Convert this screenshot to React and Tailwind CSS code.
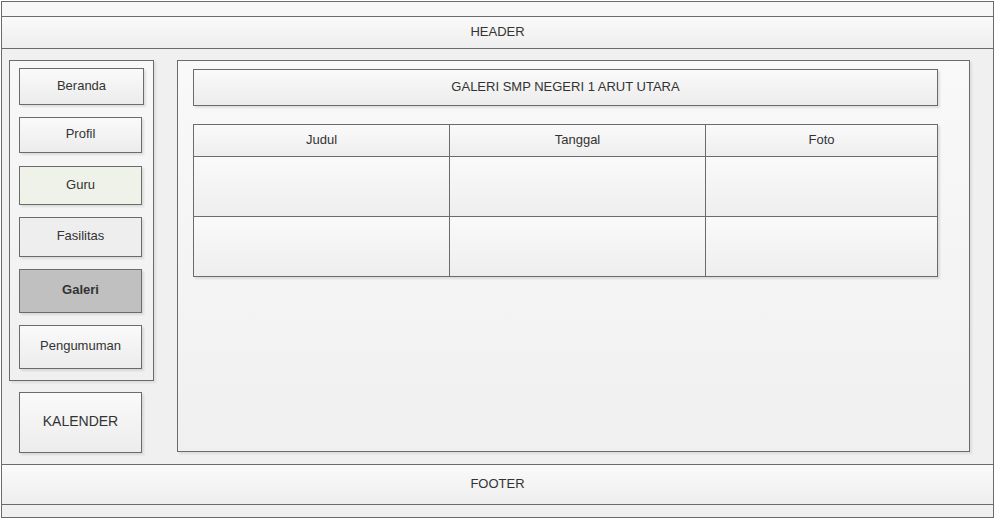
import React from 'react';

const menu = [
  { label: 'Beranda', box: 'w-[125px] h-[37px] bg-gradient-to-b from-[#fafafa] to-[#ececec]' },
  { label: 'Profil', box: 'w-[123px] h-[36px] mt-[12px] bg-gradient-to-b from-[#fafafa] to-[#ececec]' },
  { label: 'Guru', box: 'w-[123px] h-[39px] mt-[13px] bg-[#eef2e8]' },
  { label: 'Fasilitas', box: 'w-[123px] h-[40px] mt-[12px] bg-[#eeeeee]' },
  { label: 'Galeri', box: 'w-[123px] h-[44px] mt-[12px] bg-[#c0c0c0] font-bold' },
  { label: 'Pengumuman', box: 'w-[123px] h-[44px] mt-[12px] bg-gradient-to-b from-[#fafafa] to-[#ececec]' },
];

// text in the mockup sits about 1px above centre
const cell = 'bg-gradient-to-b from-[#fafafa] to-[#eeeeee] flex items-center justify-center pb-[2px]';

const App = () => {
  return (
    <div className="w-[997px] h-[521px] bg-white pt-px pl-px font-['Liberation_Sans',Arial,sans-serif] text-[13px] text-[#333]">
      <div className="w-[993px] h-[517px] border border-[#6b6b6b] bg-[#f0f0f0] flex flex-col">
        <div className="h-[14px] bg-[#f7f7f7]" />
        <div className="h-[33px] border-y border-[#6b6b6b] bg-gradient-to-b from-[#fafafa] to-[#eeeeee] flex items-center justify-center pb-[2px]">
          HEADER
        </div>

        <div className="h-[415px] flex pl-[7px] pt-[11px]">
          <div className="flex flex-col">
            <div className="w-[145px] h-[321px] border border-[#6b6b6b] bg-gradient-to-b from-[#f8f8f8] to-[#f0f0f0] pl-[9px] pt-[7px] flex flex-col shadow-[2px_2px_2px_rgba(0,0,0,0.08)]">
              {menu.map((m) => (
                <div
                  key={m.label}
                  className={`${m.box} border border-[#6b6b6b] flex items-center justify-center pb-[2px] shadow-[2px_2px_2px_rgba(0,0,0,0.1)]`}
                >
                  {m.label}
                </div>
              ))}
            </div>
            <div className="ml-[10px] mt-[11px] w-[123px] h-[61px] border border-[#6b6b6b] bg-gradient-to-b from-[#fafafa] to-[#ececec] flex items-center justify-center pb-[2px] text-[14px] shadow-[2px_2px_2px_rgba(0,0,0,0.1)]">
              KALENDER
            </div>
          </div>

          <div className="ml-[23px] w-[793px] h-[392px] border border-[#6b6b6b] bg-gradient-to-b from-[#f9f9f9] to-[#f0f0f0] pl-[15px] pt-[8px] shadow-[2px_2px_2px_rgba(0,0,0,0.08)]">
            <div className="w-[745px] h-[37px] border border-[#6b6b6b] bg-gradient-to-b from-[#fafafa] to-[#ececec] flex items-center justify-center pb-[2px] shadow-[2px_2px_2px_rgba(0,0,0,0.1)]">
              GALERI SMP NEGERI 1 ARUT UTARA
            </div>

            <div className="mt-[18px] w-[745px] border border-[#6b6b6b] grid grid-cols-[256px_256px_231px] grid-rows-[32px_60px_59px] shadow-[2px_2px_2px_rgba(0,0,0,0.1)]">
              <div className={`${cell} border-r border-b border-[#6b6b6b]`}>Judul</div>
              <div className={`${cell} border-r border-b border-[#6b6b6b]`}>Tanggal</div>
              <div className={`${cell} border-b border-[#6b6b6b]`}>Foto</div>
              <div className={`${cell} border-r border-b border-[#6b6b6b]`} />
              <div className={`${cell} border-r border-b border-[#6b6b6b]`} />
              <div className={`${cell} border-b border-[#6b6b6b]`} />
              <div className={`${cell} border-r border-[#6b6b6b]`} />
              <div className={`${cell} border-r border-[#6b6b6b]`} />
              <div className={cell} />
            </div>
          </div>
        </div>

        <div className="h-[41px] border-y border-[#6b6b6b] bg-gradient-to-b from-[#fafafa] to-[#eeeeee] flex items-center justify-center pb-[2px]">
          FOOTER
        </div>
        <div className="h-[12px] bg-[#f0f0f0]" />
      </div>
    </div>
  );
};

export default App;
